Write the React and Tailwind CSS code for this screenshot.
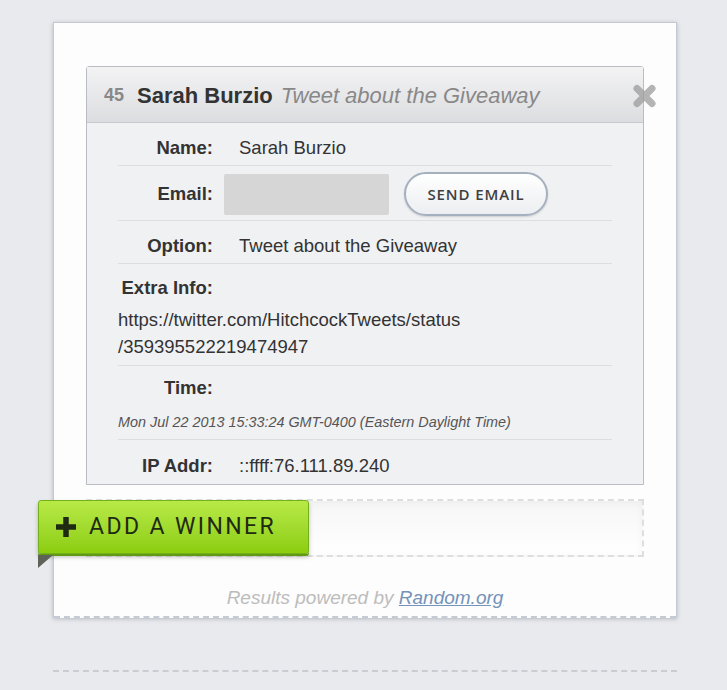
function Label({ children }) {
  return (
    <div className="w-[95px] shrink-0 text-right font-bold text-[#333]">{children}</div>
  );
}

function Row({ className = "", children }) {
  return (
    <div className={"flex items-center border-b border-[#dcdee1] " + className}>{children}</div>
  );
}

export default function App() {
  return (
    <div
      className="min-h-[690px] bg-[#e9eaed] pt-[22px] pb-[19px]"
      style={{ fontFamily: '"Liberation Sans", Arial, sans-serif' }}
    >
      {/* Entry card */}
      <div className="ml-[53px] w-[624px] border border-b-0 border-[#c3c9d2] bg-[#fdfdfd] shadow-[0_1px_4px_rgba(80,90,110,0.35)]">
        <div className="px-[32px] pt-[43px]">
          <div className="relative w-[558px] rounded-t-[3px] border border-[#b9bdc3] bg-[#f0f1f3]">
            <div className="flex h-[56px] items-center gap-[13px] border-b border-[#c6c9cd] bg-gradient-to-b from-[#f3f3f4] to-[#dcdde0] pl-[17px] pt-[2px]">
              <span className="text-[18px] font-bold text-[#888]">45</span>
              <span className="text-[22px] font-bold text-[#333]">Sarah Burzio</span>
              <span className="-ml-[5px] text-[22px] italic text-[#888]">Tweet about the Giveaway</span>
            </div>
            <button className="absolute right-[-14px] top-[17px] opacity-75 blur-[0.6px]">
              <svg width="25" height="24" viewBox="0 0 25 24">
                <path d="M5 4.5 L20 19.5 M20 4.5 L5 19.5" stroke="#9c9c9c" strokeWidth="7" strokeLinecap="round" />
              </svg>
            </button>

            <div className="mx-[31px] text-[18.5px] leading-[24px] text-[#333]">
              <Row className="pt-[13px] pb-[5px]">
                <Label>Name:</Label>
                <div className="ml-[26px]">Sarah Burzio</div>
              </Row>
              <Row className="pt-[6px] pb-[4px]">
                <Label>Email:</Label>
                <div className="ml-[11px] h-[41px] w-[165px] rounded-[2px] bg-[#d6d6d6]" />
                <button
                  className="ml-[15px] h-[44px] w-[144px] rounded-full border-2 border-[#a5b0bf] bg-gradient-to-b from-white to-[#eceef1] text-[15px] font-semibold tracking-[0.9px] text-[#3f3f3f] shadow-[0_1px_2px_rgba(0,0,0,0.15)]"
                  style={{ fontFamily: '"Open Sans", sans-serif' }}
                >
                  SEND EMAIL
                </button>
              </Row>
              <Row className="pt-[13px] pb-[5px]">
                <Label>Option:</Label>
                <div className="ml-[26px]">Tweet about the Giveaway</div>
              </Row>
              <div className="border-b border-[#dcdee1] pt-[12px] pb-[5px]">
                <Label>Extra Info:</Label>
                <div className="mt-[6px] leading-[27px]">
                  https://twitter.com/HitchcockTweets/status
                  <br />
                  /359395522219474947
                </div>
              </div>
              <div className="border-b border-[#dcdee1] pt-[10px] pb-[8px]">
                <Label>Time:</Label>
                <div className="mt-[13px] text-[14.4px] italic leading-[18px] text-[#555]">
                  Mon Jul 22 2013 15:33:24 GMT-0400 (Eastern Daylight Time)
                </div>
              </div>
              <div className="flex items-center pt-[14px] pb-[6px]">
                <Label>IP Addr:</Label>
                <div className="ml-[26px]">::ffff:76.111.89.240</div>
              </div>
            </div>
          </div>

          {/* Add winner slot */}
          <div className="relative mt-[14px] h-[58px] w-[558px] border-2 border-dashed border-[#dedede] bg-gradient-to-b from-[#f6f6f6] to-white shadow-[inset_0_2px_8px_rgba(0,0,0,0.04)]">
            <button
              className="absolute left-[-50px] top-[-1px] flex h-[54px] w-[271px] items-center rounded-[3px] border border-[#74b01a] bg-gradient-to-b from-[#b8ea45] to-[#8ccd0c] pl-[17px] text-[23px] tracking-[2.4px] text-[#1f2a12] shadow-[0_2px_0_#5f9a12,0_3px_4px_rgba(0,0,0,0.25)]"
              style={{ fontFamily: 'Roboto, "Liberation Sans", sans-serif' }}
            >
              <svg width="20" height="20" viewBox="0 0 20 20" className="mr-[13px]">
                <path d="M10 0 V20 M0 10 H20" stroke="#1f2a12" strokeWidth="5.5" />
              </svg>
              ADD A WINNER
            </button>
            <div className="absolute left-[-50px] top-[54px] h-0 w-0 border-r-[15px] border-t-[13px] border-r-transparent border-t-[#5e6358]" />
          </div>

          <div className="pt-[27px] pb-[3px] text-center text-[19px] italic text-[#bcbcbc]">
            Results powered by <span className="text-[#7592b8] underline">Random.org</span>
          </div>
        </div>
        <div className="h-[2px] border-b-2 border-dashed border-[#c5cbd3]" />
      </div>

      <div className="ml-[53px] mt-[52px] w-[624px] border-t-2 border-dashed border-[#c9cdd2]" />
    </div>
  );
}
